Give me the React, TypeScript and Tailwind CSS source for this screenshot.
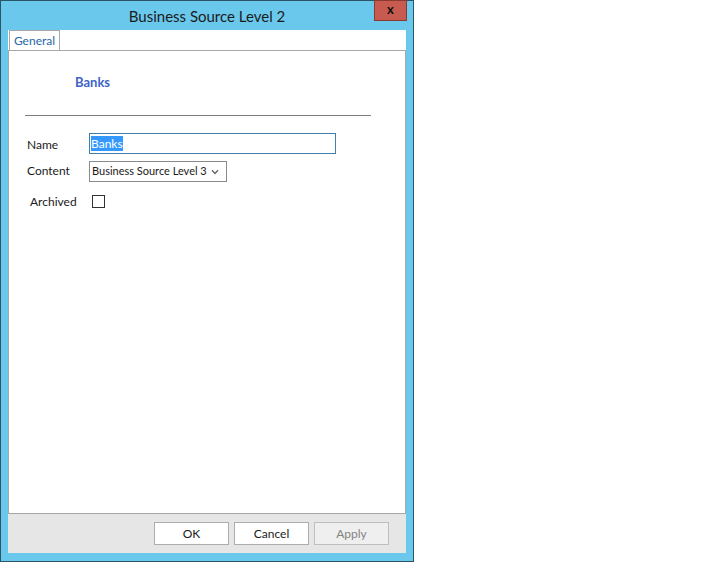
import React from "react";

export default function App() {
  const font = { fontFamily: 'Lato, "Noto Sans", sans-serif' };
  return (
    <div className="flex h-[562px] w-[708px] bg-white whitespace-nowrap" style={font}>
      <div className="relative flex h-[562px] w-[414px] flex-col border border-[#2a5467] bg-[#6ac8ec]">
        {/* title bar */}
        <div className="flex h-[29px] items-center justify-center pt-[1px] text-[15px] text-[#1b1b1b]">
          Business Source Level 2
        </div>
        <div className="absolute right-[6px] top-[-1px] flex h-[21px] w-[33px] items-center justify-center border border-[#8a3a30] bg-[#c75b4f] pb-[2px] text-[13px] font-bold leading-none text-[#111]">
          x
        </div>
        {/* client */}
        <div className="mx-[7px] flex h-[523px] flex-col bg-white">
          {/* tab strip */}
          <div className="flex h-[20px] items-end pl-[1px]">
            <div className="flex h-[20px] w-[51px] items-center justify-center border border-b-0 border-[#a8a8a8] bg-white text-[12px] text-[#2a66a6]">
              General
            </div>
          </div>
          {/* panel */}
          <div className="flex h-[464px] flex-col border border-[#a8a8a8] bg-white">
            <div className="ml-[66px] mt-[23px] h-[16px] text-[13px] font-bold leading-[16px] text-[#3d63c8]">
              Banks
            </div>
            <div className="ml-[16px] mt-[25px] h-px w-[346px] bg-[#7c7c7c]" />
            <div className="ml-[18px] mt-[17px] flex h-[21px] items-center">
              <div className="w-[62px] pt-[3px] text-[12px] text-[#1a1a1a]">Name</div>
              <div className="flex h-[21px] w-[247px] items-center border border-[#3f7fa8] bg-white px-[1px]">
                <span className="bg-[#3399ff] text-[12px] leading-[15px] text-white">Banks</span>
              </div>
            </div>
            <div className="ml-[18px] mt-[7px] flex h-[21px] items-center">
              <div className="w-[62px] pb-[1px] text-[12px] text-[#1a1a1a]">Content</div>
              <div className="flex h-[21px] w-[138px] items-center border border-[#8a8a8a] bg-white pl-[2px] pr-[7px]">
                <span className="text-[11px] text-[#1a1a1a]">Business Source Level 3</span>
                <svg className="ml-auto shrink-0" width="8" height="6" viewBox="0 0 8 6">
                  <path d="M1 1.2 L4 4.5 L7 1.2" stroke="#666" strokeWidth="1.4" fill="none" />
                </svg>
              </div>
            </div>
            <div className="ml-[21px] mt-[13px] flex h-[13px] items-center">
              <div className="w-[62px] text-[12px] text-[#1a1a1a]">Archived</div>
              <div className="h-[13px] w-[13px] border border-[#333] bg-white" />
            </div>
          </div>
          {/* footer */}
          <div className="flex h-[39px] items-start justify-end gap-[5px] bg-[#e6e6e6] pr-[17px] pt-[8px]">
            <div className="flex h-[23px] w-[75px] items-center justify-center border border-[#adadad] bg-white text-[12px] text-[#1a1a1a]">
              OK
            </div>
            <div className="flex h-[23px] w-[75px] items-center justify-center border border-[#adadad] bg-white text-[12px] text-[#1a1a1a]">
              Cancel
            </div>
            <div className="flex h-[23px] w-[75px] items-center justify-center border border-[#bfbfbf] bg-[#efefef] text-[12px] text-[#838383]">
              Apply
            </div>
          </div>
        </div>
      </div>
    </div>
  );
}
